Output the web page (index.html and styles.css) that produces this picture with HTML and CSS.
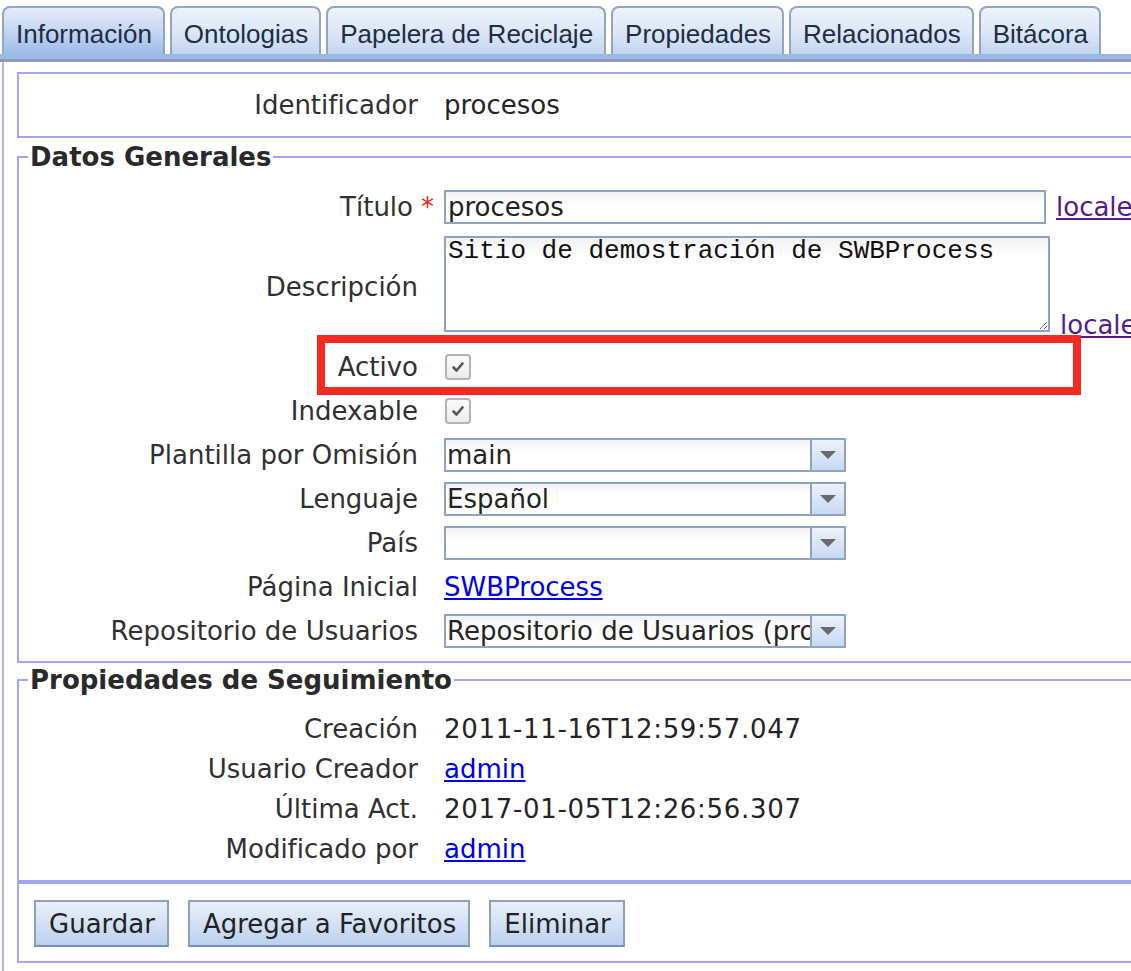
FILE: index.html
```html
<!DOCTYPE html>
<html lang="es">
<head>
<meta charset="utf-8">
<title>Información</title>
<link rel="stylesheet" href="styles.css">
</head>
<body>
<div class="page">
  <div class="tabs">
    <div class="tab active">Información</div>
    <div class="tab">Ontologias</div>
    <div class="tab">Papelera de Reciclaje</div>
    <div class="tab">Propiedades</div>
    <div class="tab">Relacionados</div>
    <div class="tab">Bitácora</div>
  </div>
  <div class="tabbar"></div>
  <div class="content">
    <div class="box ident">
      <div class="grid">
        <div class="lbl">Identificador</div><div class="val">procesos</div>
      </div>
    </div>

    <fieldset class="fs general">
      <legend>Datos Generales</legend>
      <div class="grid rows-general">
        <div class="lbl">Título<span class="req">*</span></div>
        <div class="val"><div class="input">procesos</div><a class="locale" href="#">locale</a></div>

        <div class="lbl">Descripción</div>
        <div class="val bottom"><textarea class="area">Sitio de demostración de SWBProcess</textarea><a class="locale" href="#">locale</a></div>

        <div class="lbl">Activo</div>
        <div class="val"><span class="check"><svg width="14" height="14" viewBox="0 0 14 14"><path d="M2.5 7.5 L5.5 10.5 L11.5 3.5" fill="none" stroke="#555" stroke-width="2.6" stroke-linecap="round" stroke-linejoin="round"/></svg></span></div>

        <div class="lbl">Indexable</div>
        <div class="val"><span class="check"><svg width="14" height="14" viewBox="0 0 14 14"><path d="M2.5 7.5 L5.5 10.5 L11.5 3.5" fill="none" stroke="#555" stroke-width="2.6" stroke-linecap="round" stroke-linejoin="round"/></svg></span></div>

        <div class="lbl">Plantilla por Omisión</div>
        <div class="val"><div class="select"><span class="sel-text">main</span><span class="sel-btn"><span class="tri"></span></span></div></div>

        <div class="lbl">Lenguaje</div>
        <div class="val"><div class="select"><span class="sel-text">Español</span><span class="sel-btn"><span class="tri"></span></span></div></div>

        <div class="lbl">País</div>
        <div class="val"><div class="select"><span class="sel-text"></span><span class="sel-btn"><span class="tri"></span></span></div></div>

        <div class="lbl">Página Inicial</div>
        <div class="val"><a class="link" href="#">SWBProcess</a></div>

        <div class="lbl">Repositorio de Usuarios</div>
        <div class="val"><div class="select"><span class="sel-text">Repositorio de Usuarios (procesos)</span><span class="sel-btn"><span class="tri"></span></span></div></div>
      </div>
    </fieldset>

    <fieldset class="fs tracking">
      <legend>Propiedades de Seguimiento</legend>
      <div class="grid rows-tracking">
        <div class="lbl">Creación</div><div class="val stamp">2011-11-16T12:59:57.047</div>
        <div class="lbl">Usuario Creador</div><div class="val"><a class="link" href="#">admin</a></div>
        <div class="lbl">Última Act.</div><div class="val stamp">2017-01-05T12:26:56.307</div>
        <div class="lbl">Modificado por</div><div class="val"><a class="link" href="#">admin</a></div>
      </div>
    </fieldset>

    <div class="box actions">
      <button class="btn">Guardar</button>
      <button class="btn">Agregar a Favoritos</button>
      <button class="btn">Eliminar</button>
    </div>
  </div>
  <div class="highlight"></div>
</div>
</body>
</html>
```

FILE: styles.css
```css
html, body {
  margin: 0;
  padding: 0;
  overflow: hidden;
  background: #ffffff;
}

.page {
  position: relative;
  width: 1300px;
  font-family: "DejaVu Sans", "Liberation Sans", sans-serif;
  font-size: 26px;
  line-height: 30px;
  color: #2c2c2c;
}

/* Tabs */
.tabs {
  display: flex;
  align-items: flex-end;
  padding: 6px 0 0 2px;
  height: 48px;
}

.tab {
  box-sizing: border-box;
  height: 48px;
  margin-right: 5px;
  padding: 11px 11px 0 12px;
  border: 2px solid #93a5c0;
  border-bottom: none;
  border-radius: 8px 8px 0 0;
  background: linear-gradient(#eef3fb, #dae6f6 55%, #c3d6ef);
  font-family: "Liberation Sans", Arial, sans-serif;
  font-size: 26px;
  line-height: 30px;
  color: #1f2c45;
  white-space: nowrap;
}

.tab.active {
  background: linear-gradient(#e3ecf9, #c4d7f2 50%, #9dbbe7);
}

.tabbar {
  height: 5px;
  background: #9cb8e5;
  border-bottom: 3px solid #8c9cb6;
}

/* Content */
.content {
  margin-left: 2px;
  border-left: 2px solid #b3baea;
  padding: 10px 0 8px 13px;
}

.box {
  border: 2px solid #a4a4f2;
}

.ident {
  padding: 16px 0;
}

.grid {
  display: grid;
  grid-template-columns: 399px 1fr;
  column-gap: 26px;
}

.rows-general {
  grid-template-rows: 34px 106px repeat(7, 34px);
  row-gap: 10px;
}

.rows-tracking {
  grid-auto-rows: 30px;
  row-gap: 10px;
}

.lbl {
  display: flex;
  align-items: center;
  justify-content: flex-end;
  white-space: nowrap;
  color: #303030;
}

.req {
  color: #d8261d;
  margin-left: 8px;
  margin-right: -16px;
}

.val {
  display: flex;
  align-items: center;
  gap: 10px;
  white-space: nowrap;
  color: #242424;
}

.val.bottom {
  align-items: flex-end;
}

.stamp {
  letter-spacing: 0.7px;
}

/* Fieldsets */
.fs {
  margin: 4px 0 0;
  padding: 18px 0 13px;
  border: 2px solid #a4a4f2;
  min-width: 0;
}

.fs legend {
  margin-left: 9px;
  padding: 0 2px;
  font-weight: bold;
  font-size: 26px;
  line-height: 30px;
  color: #2a2a2a;
}

.tracking {
  margin-top: 2px;
  padding: 19px 0 16px;
}

/* Inputs */
.input {
  box-sizing: border-box;
  width: 602px;
  height: 34px;
  padding: 0 2px;
  border: 2px solid #8fa3c1;
  background: linear-gradient(#f1f1f1, #ffffff 40%);
  color: #222;
  line-height: 30px;
}

.area {
  box-sizing: border-box;
  width: 606px;
  height: 96px;
  margin: 2px 0 8px;
  padding: 0 2px;
  border: 2px solid #8fa3c1;
  background: linear-gradient(#f1f1f1, #ffffff 20%);
  font-family: "Liberation Mono", "Courier New", monospace;
  font-size: 26px;
  line-height: 26px;
  color: #111;
  align-self: flex-start;
}

.locale {
  color: #551a8b;
  text-decoration: underline;
}

.link {
  color: #0000ee;
  text-decoration: underline;
}

.check {
  box-sizing: border-box;
  width: 26px;
  height: 26px;
  margin-left: 1px;
  border: 2px solid #b3b3b3;
  border-radius: 4px;
  background: linear-gradient(#fbfbfb, #ececec);
  display: flex;
  align-items: center;
  justify-content: center;
}

.select {
  box-sizing: border-box;
  width: 402px;
  height: 34px;
  display: flex;
  border: 2px solid #8fa3c1;
  background: linear-gradient(#f3f3f3, #ffffff 40%);
}

.sel-text {
  flex: 1;
  min-width: 0;
  overflow: hidden;
  padding-left: 1px;
  line-height: 30px;
  color: #242424;
}

.sel-btn {
  box-sizing: border-box;
  width: 34px;
  height: 30px;
  border-left: 2px solid #8fa3c1;
  background: linear-gradient(#edf2fb, #c6d9f2);
  display: flex;
  align-items: center;
  justify-content: center;
}

.tri {
  width: 0;
  height: 0;
  border-left: 8px solid transparent;
  border-right: 8px solid transparent;
  border-top: 8px solid #6a6a6a;
}

/* Actions */
.actions {
  display: flex;
  gap: 19px;
  padding: 16px 0 14px 15px;
}

.btn {
  box-sizing: border-box;
  height: 47px;
  padding: 0 12px 0 13px;
  border: 2px solid #8ca1bf;
  border-bottom-color: #7a90b2;
  border-radius: 0;
  background: linear-gradient(#eaf0fa, #d3e1f4 50%, #bad1ee);
  font-family: "DejaVu Sans", "Liberation Sans", sans-serif;
  font-size: 26px;
  line-height: 30px;
  color: #222;
}

/* Annotation overlay */
.highlight {
  position: absolute;
  left: 317px;
  top: 335px;
  width: 764px;
  height: 60px;
  box-sizing: border-box;
  border: 8px solid #f52a20;
}
```
